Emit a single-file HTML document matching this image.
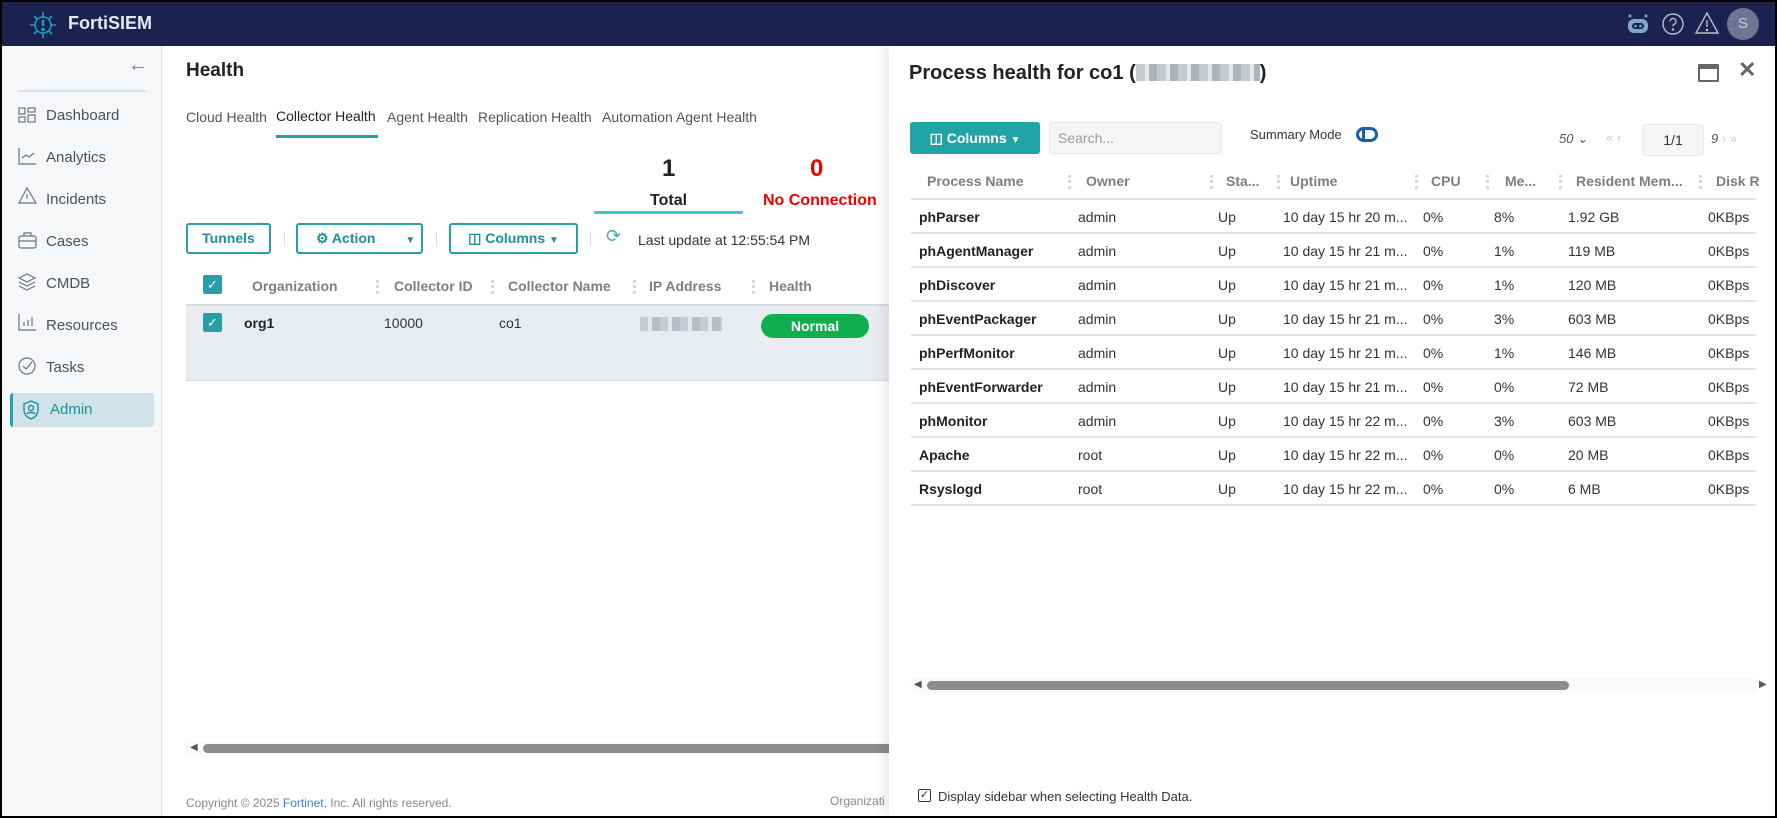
<!DOCTYPE html>
<html><head><meta charset="utf-8"><style>
*{box-sizing:border-box;margin:0;padding:0}
body{width:1777px;height:818px;overflow:hidden;font-family:"Liberation Sans",Arial,sans-serif;font-size:14px;color:#333;background:#000;position:relative}
.a{position:absolute;white-space:nowrap}
#frame{position:absolute;left:2px;top:2px;width:1773px;height:814px;background:#fff;overflow:hidden}
.hdr{left:0;top:0;width:1773px;height:44px;background:#1b2250}
.side{left:0;top:44px;width:160px;height:770px;background:#f5f7f9;border-right:1px solid #dde3ea}
.nav{left:44px;font-size:15px;color:#4a5260}
.btn{border:2px solid #26a0a6;border-radius:3px;color:#1f8f98;font-weight:bold;height:31px;line-height:27px;font-size:14px;text-align:center}
.th{color:#7a7f87;font-weight:bold;font-size:14px}
.sep{width:3px;height:14px;border-left:3px dotted #d6d9dd}
.panel{left:887px;top:44px;width:886px;height:770px;background:#fff;box-shadow:-6px 0 10px rgba(0,0,0,.08)}
.row{position:absolute;left:22px;width:845px;height:34px;border-bottom:2px solid #dde1e8;font-size:14px;color:#333}
.row span{position:absolute;top:9px;white-space:nowrap}
.b{font-weight:bold;color:#222}
</style></head><body><div id="frame">
<div class="a hdr">
 <svg class="a" style="left:24px;top:8px" width="34" height="30" viewBox="0 0 34 30" stroke="#19a0c0" fill="none" stroke-width="1.6"><circle cx="17" cy="15" r="8"/><line x1="17" y1="10" x2="17" y2="16" stroke-width="2.4"/><circle cx="17" cy="19.5" r="1" fill="#19a0c0"/><path d="M17 2v5M17 23v5M4 15h5M25 15h5M8 6l3 3M26 6l-3 3M8 24l3-3M26 24l-3-3"/></svg>
 <div class="a" style="left:66px;top:11px;font-size:18px;font-weight:bold;color:#e6e8f0">FortiSIEM</div>
 <svg class="a" style="left:1624px;top:10px" width="24" height="24" viewBox="0 0 24 24"><rect x="2" y="7" width="20" height="14" rx="6" fill="#7fa6c6"/><circle cx="4" cy="4" r="1.5" fill="#7fa6c6"/><circle cx="20" cy="4" r="1.5" fill="#7fa6c6"/><rect x="6" y="11" width="12" height="6" rx="3" fill="#1b2250"/><circle cx="9.5" cy="14" r="1.3" fill="#7fa6c6"/><circle cx="14.5" cy="14" r="1.3" fill="#7fa6c6"/></svg>
 <svg class="a" style="left:1659px;top:10px" width="24" height="24" viewBox="0 0 24 24" fill="none" stroke="#b9bed0" stroke-width="1.4"><circle cx="12" cy="12" r="10"/><path d="M9 9.5a3 3 0 1 1 4 2.8c-.8.4-1 1-1 2"/><circle cx="12" cy="17.5" r=".6" fill="#b9bed0"/></svg>
 <svg class="a" style="left:1692px;top:9px" width="26" height="24" viewBox="0 0 26 24" fill="none" stroke="#b9bed0" stroke-width="1.4"><path d="M13 2L24 22H2Z"/><path d="M13 9v7"/><circle cx="13" cy="19" r=".6" fill="#b9bed0"/></svg>
 <div class="a" style="left:1725px;top:6px;width:32px;height:32px;border-radius:50%;background:#6e7591;color:#c8ccd8;text-align:center;line-height:32px;font-size:15px">S</div>
</div>
<div class="a side">
 <div class="a" style="left:126px;top:8px;font-size:20px;color:#7a8090">&#8592;</div>
 <div class="a" style="left:16px;top:44px;width:128px;height:2px;background:#dde2ec"></div>
</div>
<svg class="a" style="left:16px;top:104px" width="20" height="290" viewBox="0 0 20 290" fill="none" stroke="#6b7280" stroke-width="1.2">
 <rect x="1" y="2" width="6" height="6"/><rect x="10" y="2" width="7" height="4"/><rect x="1" y="11" width="6" height="5"/><rect x="10" y="9" width="7" height="7"/>
 <path d="M1 42v16h17M4 52l4-3 3 2 5-4"/>
 <path d="M9 82L1 97h17z M9 88v5"/>
 <rect x="1" y="130" width="17" height="12" rx="2"/><path d="M6 130v-3h7v3M1 135h17"/>
 <path d="M9 168l8 4-8 4-8-4z M1 176l8 4 8-4 M1 180l8 4 8-4"/>
 <path d="M1 208v16h17M6 220v-4M10 220v-6M14 220v-9"/>
 <circle cx="9" cy="260" r="8"/><path d="M5 260l3 3 6-7"/>
</svg>
<div class="a nav" style="top:105px">Dashboard</div>
<div class="a nav" style="top:147px">Analytics</div>
<div class="a nav" style="top:189px">Incidents</div>
<div class="a nav" style="top:231px">Cases</div>
<div class="a nav" style="top:273px">CMDB</div>
<div class="a nav" style="top:315px">Resources</div>
<div class="a nav" style="top:357px">Tasks</div>
<div class="a" style="left:8px;top:391px;width:144px;height:34px;background:#d0e3e8;border-left:3px solid #26a0a6;border-radius:3px"></div>
<svg class="a" style="left:20px;top:398px" width="18" height="20" viewBox="0 0 18 20" fill="none" stroke="#1f8f98" stroke-width="1.4"><path d="M9 1l7 3v6c0 5-4 8-7 9-3-1-7-4-7-9V4z"/><circle cx="9" cy="8" r="2.5"/><path d="M5 14c1-2 7-2 8 0"/></svg>
<div class="a nav" style="left:48px;top:399px;color:#1f8f98">Admin</div>

<div class="a" style="left:184px;top:58px;font-size:19px;font-weight:bold;color:#222">Health</div>
<div class="a" style="left:184px;top:107px;color:#555">Cloud Health</div>
<div class="a" style="left:274px;top:106px;color:#222">Collector Health</div>
<div class="a" style="left:274px;top:133px;width:102px;height:3px;background:#26a0a6"></div>
<div class="a" style="left:385px;top:107px;color:#555">Agent Health</div>
<div class="a" style="left:476px;top:107px;color:#555">Replication Health</div>
<div class="a" style="left:600px;top:107px;color:#555">Automation Agent Health</div>
<div class="a" style="left:660px;top:153px;font-size:24px;font-weight:bold;color:#222">1</div>
<div class="a" style="left:648px;top:190px;font-size:16px;font-weight:bold;color:#222">Total</div>
<div class="a" style="left:592px;top:209px;width:149px;height:3px;background:#3ac4d0;border-radius:2px"></div>
<div class="a" style="left:808px;top:153px;font-size:24px;font-weight:bold;color:#e00">0</div>
<div class="a" style="left:761px;top:190px;font-size:16px;font-weight:bold;color:#e00">No Connection</div>
<div class="a btn" style="left:184px;top:221px;width:85px">Tunnels</div>
<div class="a" style="left:282px;top:230px;width:1px;height:14px;background:#ddd"></div>
<div class="a btn" style="left:294px;top:221px;width:127px;text-align:left;padding-left:18px">&#9881; Action <span style="margin-left:26px;font-size:10px">&#9660;</span></div>
<div class="a" style="left:434px;top:230px;width:1px;height:14px;background:#ddd"></div>
<div class="a btn" style="left:447px;top:221px;width:129px">&#9707; Columns <span style="font-size:10px">&#9660;</span></div>
<div class="a" style="left:588px;top:230px;width:1px;height:14px;background:#ddd"></div>
<div class="a" style="left:604px;top:224px;font-size:18px;color:#3ab0c0">&#10227;</div>
<div class="a" style="left:636px;top:230px;color:#333">Last update at 12:55:54 PM</div>
<div class="a" style="left:201px;top:273px;width:19px;height:19px;background:#26a0a6;border-radius:2px;color:#fff;text-align:center;line-height:19px;font-size:13px">&#10003;</div>
<div class="a th" style="left:250px;top:276px">Organization</div>
<div class="a sep" style="left:374px;top:278px"></div>
<div class="a th" style="left:392px;top:276px">Collector ID</div>
<div class="a sep" style="left:489px;top:278px"></div>
<div class="a th" style="left:506px;top:276px">Collector Name</div>
<div class="a sep" style="left:631px;top:278px"></div>
<div class="a th" style="left:647px;top:276px">IP Address</div>
<div class="a sep" style="left:750px;top:278px"></div>
<div class="a th" style="left:767px;top:276px">Health</div>
<div class="a" style="left:184px;top:302px;width:710px;height:77px;background:#e9edf2;border-top:2px solid #d6dbe2;border-bottom:1px solid #d6dbe2"></div>
<div class="a" style="left:201px;top:311px;width:19px;height:19px;background:#26a0a6;border-radius:2px;color:#fff;text-align:center;line-height:19px;font-size:13px">&#10003;</div>
<div class="a b" style="left:242px;top:313px">org1</div>
<div class="a" style="left:382px;top:313px">10000</div>
<div class="a" style="left:497px;top:313px">co1</div>
<div class="a" style="left:638px;top:315px;width:82px;height:14px;background:repeating-linear-gradient(90deg,#c8ccd2 0 8px,#e3e6ea 8px 12px,#b9bec6 12px 20px)"></div>
<div class="a" style="left:759px;top:312px;width:108px;height:24px;border-radius:12px;background:#0fae4f;color:#fff;font-weight:bold;text-align:center;line-height:24px;font-size:14px">Normal</div>
<div class="a" style="left:184px;top:740px;width:710px;height:14px;background:#fafafa"></div>
<div class="a" style="left:188px;top:740px;font-size:10px;color:#555">&#9664;</div>
<div class="a" style="left:201px;top:742px;width:693px;height:9px;border-radius:5px;background:#8c8c8c"></div>
<div class="a" style="left:184px;top:794px;font-size:12px;color:#888">Copyright © 2025 <span style="color:#3d7fd6">Fortinet</span>, Inc. All rights reserved.</div>
<div class="a" style="left:828px;top:792px;font-size:12px;color:#888">Organizati</div>

<div class="a panel">
 <div class="a" style="left:20px;top:16px;font-size:20px;font-weight:bold;color:#222">Process health for co1 (<span style="display:inline-block;width:124px;height:17px;vertical-align:-2px;background:repeating-linear-gradient(90deg,#c6c9ce 0 9px,#e5e7ea 9px 13px,#aeb3ba 13px 21px)"></span>)</div>
 <div class="a" style="left:809px;top:18px;width:21px;height:18px;border:2px solid #666;border-top-width:5px;border-radius:1px"></div>
 <div class="a" style="left:849px;top:11px;font-size:22px;font-weight:bold;color:#666">&#10005;</div>
 <div class="a" style="left:21px;top:76px;width:130px;height:32px;background:#22a3a8;border-radius:3px;color:#fff;font-weight:bold;text-align:center;line-height:32px">&#9707; Columns <span style="font-size:10px">&#9660;</span></div>
 <div class="a" style="left:160px;top:76px;width:173px;height:32px;background:#f4f5f7;border:1px solid #e6e8eb;border-radius:4px;color:#999;padding-left:8px;line-height:30px">Search...</div>
 <div class="a" style="left:361px;top:81px;font-size:13px;color:#333">Summary Mode</div>
 <div class="a" style="left:467px;top:81px;width:22px;height:15px;border:3px solid #1c5fa8;border-radius:8px"></div>
 <div class="a" style="left:473px;top:81px;width:3px;height:15px;background:#1c5fa8"></div>
 <div class="a" style="left:670px;top:85px;font-size:13px;font-style:italic;color:#555">50 &#8964;</div>
 <div class="a" style="left:717px;top:84px;font-size:13px;color:#ccc">&#171; &#8249;</div>
 <div class="a" style="left:753px;top:78px;width:62px;height:32px;background:#f4f5f7;border:1px solid #e6e8eb;border-radius:4px;text-align:center;line-height:30px;color:#333">1/1</div>
 <div class="a" style="left:822px;top:85px;font-size:13px;font-style:italic;color:#555">9 <span style="color:#ccc;font-style:normal">&#8250; &#187;</span></div>
 <div class="a" style="left:0;top:127px;width:886px;height:20px">
  <div class="a th" style="left:38px;top:0">Process Name</div>
  <div class="a sep" style="left:179px;top:2px"></div>
  <div class="a th" style="left:197px;top:0">Owner</div>
  <div class="a sep" style="left:321px;top:2px"></div>
  <div class="a th" style="left:337px;top:0">Sta...</div>
  <div class="a sep" style="left:388px;top:2px"></div>
  <div class="a th" style="left:401px;top:0">Uptime</div>
  <div class="a sep" style="left:526px;top:2px"></div>
  <div class="a th" style="left:542px;top:0">CPU</div>
  <div class="a sep" style="left:597px;top:2px"></div>
  <div class="a th" style="left:616px;top:0">Me...</div>
  <div class="a sep" style="left:670px;top:2px"></div>
  <div class="a th" style="left:687px;top:0">Resident Mem...</div>
  <div class="a sep" style="left:810px;top:2px"></div>
  <div class="a th" style="left:827px;top:0">Disk R</div>
 </div>
 <div class="a" style="left:22px;top:152px;width:845px;height:2px;background:#dde1e8"></div>
 <div style="position:absolute;left:0;top:154px">
  <div class="row" style="top:0"><span class="b" style="left:8px">phParser</span><span style="left:167px">admin</span><span style="left:307px">Up</span><span style="left:372px">10 day 15 hr 20 m...</span><span style="left:512px">0%</span><span style="left:583px">8%</span><span style="left:657px">1.92 GB</span><span style="left:797px">0KBps</span></div>
  <div class="row" style="top:34px"><span class="b" style="left:8px">phAgentManager</span><span style="left:167px">admin</span><span style="left:307px">Up</span><span style="left:372px">10 day 15 hr 21 m...</span><span style="left:512px">0%</span><span style="left:583px">1%</span><span style="left:657px">119 MB</span><span style="left:797px">0KBps</span></div>
  <div class="row" style="top:68px"><span class="b" style="left:8px">phDiscover</span><span style="left:167px">admin</span><span style="left:307px">Up</span><span style="left:372px">10 day 15 hr 21 m...</span><span style="left:512px">0%</span><span style="left:583px">1%</span><span style="left:657px">120 MB</span><span style="left:797px">0KBps</span></div>
  <div class="row" style="top:102px"><span class="b" style="left:8px">phEventPackager</span><span style="left:167px">admin</span><span style="left:307px">Up</span><span style="left:372px">10 day 15 hr 21 m...</span><span style="left:512px">0%</span><span style="left:583px">3%</span><span style="left:657px">603 MB</span><span style="left:797px">0KBps</span></div>
  <div class="row" style="top:136px"><span class="b" style="left:8px">phPerfMonitor</span><span style="left:167px">admin</span><span style="left:307px">Up</span><span style="left:372px">10 day 15 hr 21 m...</span><span style="left:512px">0%</span><span style="left:583px">1%</span><span style="left:657px">146 MB</span><span style="left:797px">0KBps</span></div>
  <div class="row" style="top:170px"><span class="b" style="left:8px">phEventForwarder</span><span style="left:167px">admin</span><span style="left:307px">Up</span><span style="left:372px">10 day 15 hr 21 m...</span><span style="left:512px">0%</span><span style="left:583px">0%</span><span style="left:657px">72 MB</span><span style="left:797px">0KBps</span></div>
  <div class="row" style="top:204px"><span class="b" style="left:8px">phMonitor</span><span style="left:167px">admin</span><span style="left:307px">Up</span><span style="left:372px">10 day 15 hr 22 m...</span><span style="left:512px">0%</span><span style="left:583px">3%</span><span style="left:657px">603 MB</span><span style="left:797px">0KBps</span></div>
  <div class="row" style="top:238px"><span class="b" style="left:8px">Apache</span><span style="left:167px">root</span><span style="left:307px">Up</span><span style="left:372px">10 day 15 hr 22 m...</span><span style="left:512px">0%</span><span style="left:583px">0%</span><span style="left:657px">20 MB</span><span style="left:797px">0KBps</span></div>
  <div class="row" style="top:272px"><span class="b" style="left:8px">Rsyslogd</span><span style="left:167px">root</span><span style="left:307px">Up</span><span style="left:372px">10 day 15 hr 22 m...</span><span style="left:512px">0%</span><span style="left:583px">0%</span><span style="left:657px">6 MB</span><span style="left:797px">0KBps</span></div>
 </div>
 <div class="a" style="left:22px;top:632px;width:845px;height:15px;background:#fafafa"></div>
 <div class="a" style="left:25px;top:633px;font-size:10px;color:#555">&#9664;</div>
 <div class="a" style="left:870px;top:633px;font-size:10px;color:#555">&#9654;</div>
 <div class="a" style="left:38px;top:635px;width:642px;height:9px;border-radius:5px;background:#8c8c8c"></div>
 <div class="a" style="left:29px;top:743px;width:13px;height:13px;border:1.5px solid #333;border-radius:2px;font-size:11px;line-height:10px;text-align:center">&#10003;</div>
 <div class="a" style="left:49px;top:743px;font-size:13px;color:#333">Display sidebar when selecting Health Data.</div>
</div>
</div></body></html>
